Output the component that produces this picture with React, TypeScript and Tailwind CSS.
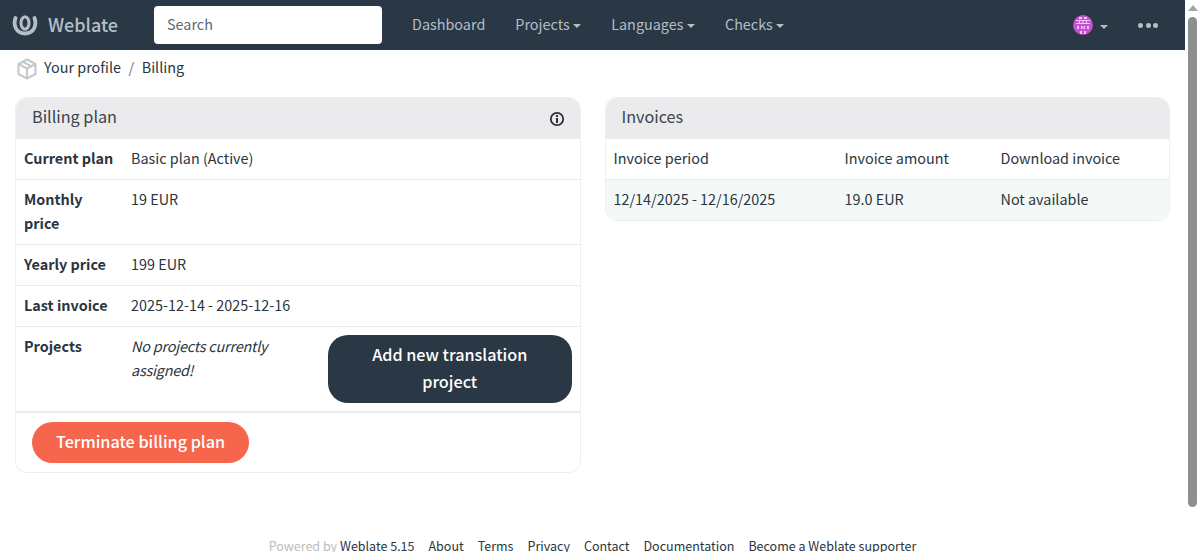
import React from "react";

function Caret() {
  return <span className="ml-[3.5px] inline-block h-0 w-0 border-x-[4px] border-x-transparent border-t-[4.5px] border-t-current align-[2px]" />;
}

function Logo() {
  return (
    <svg width="26" height="22" viewBox="0 0 26 22" fill="none" stroke="#b4bec8" strokeLinecap="round">
      <ellipse cx="13" cy="9" rx="4" ry="6.2" strokeWidth="3" />
      <path d="M3.5 4C1 11 4 19.5 13 19.5C22 19.5 25 11 22.5 4" strokeWidth="3.8" />
    </svg>
  );
}

function Cube() {
  return (
    <svg width="20" height="22" viewBox="0 0 20 22" fill="none" stroke="#c6cacd" strokeWidth="2.2" strokeLinejoin="round">
      <path d="M10 1.5L18.5 6V16L10 20.5L1.5 16V6Z" />
      <path d="M1.5 6L10 10.5L18.5 6M10 10.5V20.5M6 3.8L14 8.2" />
    </svg>
  );
}

function Avatar() {
  return (
    <svg width="20" height="20" viewBox="0 0 20 20">
      <circle cx="10" cy="10" r="10" fill="#c64fd6" />
      <g fill="#f2c6f5">
        <rect x="6" y="2" width="3" height="2" /><rect x="11" y="2" width="3" height="2" />
        <rect x="3" y="5" width="14" height="1" /><rect x="3" y="8" width="14" height="1" />
        <rect x="6" y="5" width="1" height="4" /><rect x="9.5" y="5" width="1" height="4" /><rect x="13" y="5" width="1" height="4" />
        <rect x="4" y="11" width="2" height="3" /><rect x="8" y="11" width="1.5" height="3" /><rect x="10.5" y="11" width="1.5" height="3" /><rect x="14" y="11" width="2" height="3" />
        <rect x="7" y="16" width="2" height="3" /><rect x="11" y="16" width="2" height="3" />
      </g>
    </svg>
  );
}

function Row({ label, children }: { label: string; children: React.ReactNode }) {
  return (
    <div className="flex border-b border-[#e9ecee] px-2 pb-[9px] pt-[7px]">
      <div className="w-[107px] shrink-0 pr-3 font-bold">{label}</div>
      <div className="flex-1">{children}</div>
    </div>
  );
}

export default function App() {
  return (
    <div className="flex h-[552px] w-[1200px] overflow-hidden bg-white text-[14.4px] leading-6 text-[#2a3540] [font-family:'Noto_Sans_CJK_SC','Noto_Sans',sans-serif]">
      <div className="flex w-[1185px] flex-col overflow-hidden">
        <nav className="flex h-[50px] shrink-0 items-center bg-[#2a3744] text-[#b4bec8]">
          <div className="ml-[12px] flex w-[142px] items-center gap-[10px]">
            <Logo />
            <span className="pb-[2px] text-[18px] font-medium">Weblate</span>
          </div>
          <div className="flex h-[38px] w-[228px] items-center rounded-[4px] bg-white pb-[2px] pl-[13px] text-[#5f6a73]">Search</div>
          <div className="ml-[30px] flex items-center gap-[30px] pb-[2px]">
            <span>Dashboard</span>
            <span>Projects<Caret /></span>
            <span>Languages<Caret /></span>
            <span>Checks<Caret /></span>
          </div>
          <div className="ml-auto flex items-center">
            <Avatar />
            <span className="ml-[3.5px] mr-[30px]"><Caret /></span>
            <div className="mr-[27px] flex gap-[2.5px]">
              <span className="h-[5px] w-[5px] rounded-full bg-[#b4bec8]" />
              <span className="h-[5px] w-[5px] rounded-full bg-[#b4bec8]" />
              <span className="h-[5px] w-[5px] rounded-full bg-[#b4bec8]" />
            </div>
          </div>
        </nav>

        <div className="flex h-[37px] shrink-0 items-center pl-[17px]">
          <Cube />
          <div className="pb-[3px]">
            <span className="ml-[7px]">Your profile</span>
            <span className="mx-[7.5px] text-[#6c757d]">/</span>
            <span>Billing</span>
          </div>
        </div>

        <main className="mt-[10px] grid grid-cols-2 items-start gap-x-[24px] px-[15px]">
          <section className="rounded-[12px] border border-[#eceef0]">
            <header className="flex h-[41px] items-center justify-between rounded-t-[12px] bg-[#ebebed] pl-[16px] pr-[15px] text-[16.2px] text-[#3a444d]">
              <span className="pb-[5px]">Billing plan</span>
              <svg width="16" height="16" viewBox="0 0 16 16" fill="none">
                <circle cx="8" cy="8" r="6.2" stroke="#2a3038" strokeWidth="1.8" />
                <rect x="7" y="7" width="2" height="5" fill="#2a3038" />
                <rect x="7" y="4" width="2" height="2" fill="#2a3038" />
              </svg>
            </header>
            <Row label="Current plan">Basic plan (Active)</Row>
            <Row label="Monthly price">19 EUR</Row>
            <Row label="Yearly price">199 EUR</Row>
            <Row label="Last invoice">2025-12-14 - 2025-12-16</Row>
            <div className="flex border-b-2 border-[#e9ecee] pb-2 pl-2 pr-2 pt-2">
              <div className="w-[107px] shrink-0 -translate-y-px font-bold">Projects</div>
              <div className="w-[197px] shrink-0 -translate-y-px pr-10 italic tracking-[-0.2px]">No projects currently assigned!</div>
              <button className="h-[68px] w-[244px] rounded-[20px] bg-[#2a3744] px-8 pb-[2px] text-[16.2px] font-medium leading-[27px] text-white">Add new translation project</button>
            </div>
            <div className="h-[59px] px-[16px] pt-[9px]">
              <button className="h-[41px] rounded-[21px] bg-[#f6664c] px-6 pb-[4px] text-[16.2px] font-medium text-white">Terminate billing plan</button>
            </div>
          </section>

          <section className="rounded-[12px] border border-[#eceef0]">
            <header className="flex h-[41px] items-center rounded-t-[12px] bg-[#ebebed] pl-[16px] text-[16.2px] text-[#3a444d]">
              <span className="pb-[5px]">Invoices</span>
            </header>
            <div className="flex border-b border-[#e9ecee] px-2 pb-[9px] pt-[7px]">
              <div className="w-[231px]">Invoice period</div>
              <div className="w-[156px]">Invoice amount</div>
              <div>Download invoice</div>
            </div>
            <div className="flex rounded-b-[12px] bg-[#f4f9f8] px-2 pb-[9px] pt-[7px]">
              <div className="w-[231px]">12/14/2025 - 12/16/2025</div>
              <div className="w-[156px]">19.0 EUR</div>
              <div>Not available</div>
            </div>
          </section>
        </main>

        <footer className="mt-[63px] flex justify-center gap-[14px] text-[12.5px] leading-[20px]">
          <span><span className="text-[#b9bdc1]">Powered by </span>Weblate 5.15</span>
          <span>About</span>
          <span>Terms</span>
          <span>Privacy</span>
          <span>Contact</span>
          <span>Documentation</span>
          <span>Become a Weblate supporter</span>
        </footer>
      </div>

      <div className="flex w-[15px] shrink-0 flex-col items-center bg-white">
        <div className="mt-[5px] h-0 w-0 border-x-[5px] border-x-transparent border-b-[6px] border-b-[#a3a3a3]" />
        <div className="mt-[6px] h-[490px] w-[9px] rounded-full bg-[#8f8f8f]" />
      </div>
    </div>
  );
}
